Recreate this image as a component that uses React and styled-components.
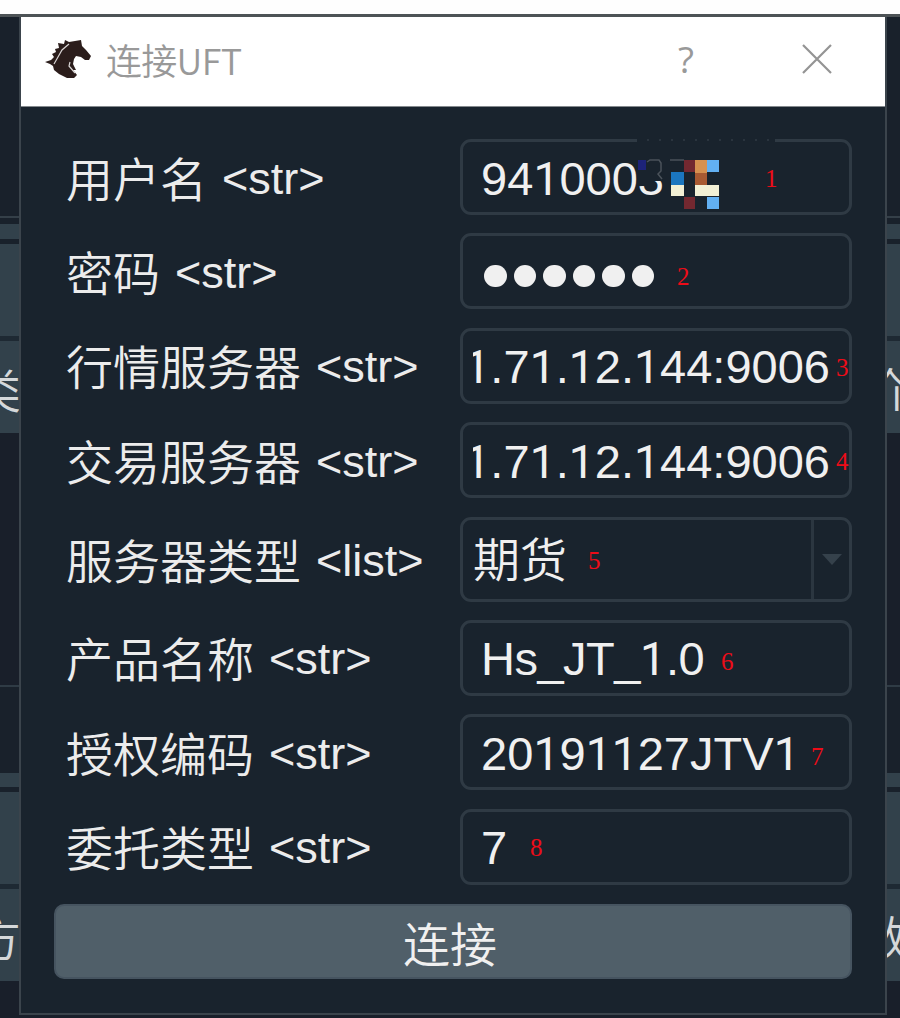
import React from "react";
import styled, { createGlobalStyle } from "styled-components";

const GlobalStyle = createGlobalStyle`
  * {
    box-sizing: border-box;
  }
  body {
    margin: 0;
    background-color: #19232d;
    font-family: "Liberation Sans", "Noto Sans CJK SC", sans-serif;
  }
`;

const Screen = styled.div`
  width: 900px;
  height: 1018px;
  overflow: hidden;
  display: flex;
  flex-direction: column;
  background-color: #191f2a;
`;

const TopStrip = styled.div`
  height: 17px;
  flex: none;
  background-color: #fefefe;
  border-bottom: 3px solid #4d5356;
`;

const Content = styled.div`
  flex: 1;
  display: flex;
  min-height: 0;
`;

const Side = styled.div`
  width: ${(props) => props.$width}px;
  flex: none;
  display: flex;
  flex-direction: column;
  overflow: hidden;
`;

const SideBlock = styled.div`
  height: ${(props) => props.$height}px;
  flex: none;
  display: flex;
  align-items: center;
  justify-content: ${(props) => (props.$right ? "flex-start" : "flex-end")};
  overflow: hidden;
  background-color: ${(props) => props.$color || "#19212b"};
`;

const SideText = styled.span`
  margin: ${(props) => (props.$right ? "-2px 0 0 -26px" : "0 -2px 0 0")};
  color: #d5d8da;
  font-family: "Noto Sans CJK SC", sans-serif;
  font-weight: 350;
  font-size: 47px;
  line-height: 47px;
  white-space: nowrap;
`;

const Dialog = styled.div`
  width: 868px;
  height: 998px;
  flex: none;
  border: 2px solid #3b444c;
  border-top: none;
  background-color: #19232d;
`;

const TitleBar = styled.div`
  height: 90px;
  padding: 0 52px 0 24px;
  display: flex;
  align-items: center;
  background-color: #ffffff;
  border-bottom: 1px solid #84898d;
  color: #999999;
`;

const Title = styled.div`
  flex: 1;
  margin-left: 14px;
  padding-bottom: 6px;
  font-family: "Noto Sans CJK SC", sans-serif;
  font-weight: 350;
  font-size: 36px;
  line-height: 50px;
  letter-spacing: -0.7px;
`;

const HelpButton = styled.div`
  margin-right: 107px;
  padding-bottom: 5px;
  font-family: "Open Sans", sans-serif;
  font-size: 37px;
  line-height: 40px;
`;

const CloseButton = styled.div`
  display: flex;
  padding-bottom: 5px;
`;

const Form = styled.div`
  padding: 32px 33px 0 33px;
  display: flex;
  flex-direction: column;
`;

const Row = styled.div`
  height: ${(props) => props.$height || 76}px;
  margin-bottom: 18.4px;
  display: flex;
  align-items: center;
`;

const Label = styled.div`
  width: 406px;
  flex: none;
  padding: 3px 0 0 12px;
  display: flex;
  align-items: center;
  gap: 15px;
  color: #ececec;
  font-size: 45px;
  line-height: 60px;
  white-space: nowrap;
`;

const Han = styled.span`
  padding-bottom: 4px;
  font-family: "Noto Sans CJK SC", sans-serif;
  font-weight: 350;
  font-size: 47px;
  line-height: 60px;
`;

const Field = styled.div`
  position: relative;
  width: 393px;
  height: 100%;
  padding-left: ${(props) => props.$indent || 18}px;
  display: flex;
  align-items: center;
  border: 3px solid #2f3a44;
  border-radius: 11px;
  color: #f0f0f0;
  font-size: 47px;
  line-height: 60px;
  white-space: nowrap;
`;

const Value = styled.span`
  display: flex;
  align-items: baseline;
  padding-top: 3px;
  letter-spacing: ${(props) => props.$spacing || 0}px;
`;

// Roboto draws the digit 1 without a foot
const One = styled.span`
  width: 26.1px;
  font-family: Roboto, sans-serif;
  font-size: 46px;
  letter-spacing: 0;
  text-align: center;
`;

const HostValue = styled.div`
  width: 357px;
  flex: none;
  display: flex;
  justify-content: flex-end;
  overflow: hidden;
`;

const Mark = styled.span`
  position: absolute;
  left: ${(props) => props.$left}px;
  top: ${(props) => props.$top}px;
  color: #ed0c18;
  font-family: "Liberation Serif", serif;
  font-size: 25px;
  line-height: 28px;
`;

const Dots = styled.div`
  display: flex;
  gap: 7px;
  margin: 9px 0 0 3px;
`;

const Dot = styled.span`
  width: 22.5px;
  height: 22.5px;
  border-radius: 50%;
  background-color: #f0f0f0;
`;

const Mosaic = styled.svg`
  position: absolute;
  left: 172px;
  top: -3px;
`;

const DropDown = styled.div`
  width: 38px;
  height: 100%;
  margin-left: auto;
  display: flex;
  align-items: center;
  justify-content: center;
  border-left: 3px solid #2b3640;
`;

const ConnectButton = styled.button`
  height: 75px;
  margin-top: 1px;
  padding: 0 6px 0 0;
  border: 2px solid #465460;
  border-radius: 10px;
  background-color: #505f69;
  color: #f0f0f0;
`;

const leftBlocks = [
  [199],
  [2, "#343f48"],
  [6],
  [15, "#32414b"],
  [5],
  [92, "#32414b"],
  [5, "#1e2933"],
  [92, "#32414b", "类"],
  [252, "#191f2a"],
  [2, "#2f3b45"],
  [86],
  [14, "#32414b"],
  [5],
  [92, "#32414b"],
  [5, "#1e2933"],
  [92, "#32414b", "方"],
];

const rightBlocks = leftBlocks.map(([height, color, text]) => [
  height,
  color,
  text === "类" ? "价" : text === "方" ? "数" : "",
]);

function SideStrip({ width, blocks, right }) {
  return (
    <Side $width={width}>
      {blocks.map(([height, color, text], index) => (
        <SideBlock key={index} $height={height} $color={color} $right={right}>
          {text && <SideText $right={right}>{text}</SideText>}
        </SideBlock>
      ))}
    </Side>
  );
}

function HorseIcon() {
  return (
    <svg width="47" height="46" viewBox="0 0 47 46">
      <path
        fill="#2b1d1b"
        d="M20 1 L24 3 L36 1 L37 7 L41 11 L46 17 L44 21 L40 21 L36 18 L31 17 L29 20 L28 25 L31 31 L28 31 L32 36 L29 39 L22 39 L14 35 L9 31 L8 27 L5 25 L0 23 L6 21 L9 18 L7 15 L11 13 L10 10 L14 9 L13 4 L19 5 Z"
      />
      <path
        fill="none"
        stroke="#d9d5d4"
        strokeWidth="1.2"
        d="M24 5 L17 11 L13 18 L9 25 M25 23 L24 27 L30 34"
      />
    </svg>
  );
}

function CloseIcon() {
  return (
    <svg width="32" height="32" viewBox="0 0 32 32">
      <path d="M2 2 L30 30 M30 2 L2 30" stroke="#949494" strokeWidth="2.2" />
    </svg>
  );
}

function MaskedDigits() {
  return (
    <Mosaic width="142" height="73" viewBox="0 0 142 73">
      <path fill="#19232d" d="M2 0 H140 V4 H2 Z M4 18 H32 V42 H4 Z" />
      <path
        fill="none"
        stroke="#2a343e"
        strokeWidth="2"
        strokeDasharray="2 10"
        d="M12 1 H138"
      />
      <path
        fill="none"
        stroke="#4a525a"
        strokeWidth="1.5"
        d="M12 23 L15 21 H24 L26 24 V32 L23 35 L27 40 M35 21 H49"
      />
      <path fill="#1d2379" d="M3 21 h8 v10 h-8z" />
      <path fill="#732830" d="M49 21 h11 v12 h-11z M49 58 h11 v12 h-11z" />
      <path fill="#d69150" d="M60 21 h12 v13 h-12z" />
      <path fill="#a85a32" d="M60 34 h12 v12 h-12z" />
      <path fill="#62b0f2" d="M72 21 h12 v12 h-12z M72 58 h12 v12 h-12z" />
      <path fill="#1b76bf" d="M36 33 h13 v13 h-13z" />
      <path fill="#f2f0d5" d="M36 46 h13 v11 h-13z M60 46 h24 v11 h-24z" />
    </Mosaic>
  );
}

function FieldText({ text, spacing }) {
  return (
    <Value $spacing={spacing}>
      {text
        .split(/(1)/)
        .filter((part) => part)
        .map((part, index) =>
          part === "1" ? (
            <One key={index}>1</One>
          ) : (
            <span key={index}>{part}</span>
          )
        )}
    </Value>
  );
}

function FormRow({ name, type = "str", height, indent, children }) {
  return (
    <Row $height={height}>
      <Label>
        <Han>{name}</Han>
        <span>&lt;{type}&gt;</span>
      </Label>
      <Field $indent={indent}>{children}</Field>
    </Row>
  );
}

export default function App() {
  return (
    <Screen>
      <GlobalStyle />
      <TopStrip />
      <Content>
        <SideStrip width={19} blocks={leftBlocks} />
        <Dialog>
          <TitleBar>
            <HorseIcon />
            <Title>连接UFT</Title>
            <HelpButton>?</HelpButton>
            <CloseButton>
              <CloseIcon />
            </CloseButton>
          </TitleBar>
          <Form>
            <FormRow name="用户名">
              <FieldText text="9410003" />
              <MaskedDigits />
              <Mark $left={302} $top={23}>1</Mark>
            </FormRow>
            <FormRow name="密码">
              <Dots>
                {[0, 1, 2, 3, 4, 5].map((dot) => (
                  <Dot key={dot} />
                ))}
              </Dots>
              <Mark $left={214} $top={27}>2</Mark>
            </FormRow>
            <FormRow name="行情服务器" indent={10}>
              <HostValue>
                <FieldText text="1.71.12.144:9006" />
              </HostValue>
              <Mark $left={373} $top={23}>3</Mark>
            </FormRow>
            <FormRow name="交易服务器" indent={10}>
              <HostValue>
                <FieldText text="1.71.12.144:9006" />
              </HostValue>
              <Mark $left={373} $top={23}>4</Mark>
            </FormRow>
            <FormRow name="服务器类型" type="list" height={85} indent={10}>
              <Han>期货</Han>
              <Mark $left={125} $top={27}>5</Mark>
              <DropDown>
                <svg width="20" height="11" viewBox="0 0 20 11">
                  <path d="M0 0 H20 L10 11 Z" fill="#35414b" />
                </svg>
              </DropDown>
            </FormRow>
            <FormRow name="产品名称">
              <FieldText text="Hs_JT_1.0" spacing={-0.5} />
              <Mark $left={258} $top={25}>6</Mark>
            </FormRow>
            <FormRow name="授权编码">
              <FieldText text="20191127JTV1" />
              <Mark $left={348} $top={26}>7</Mark>
            </FormRow>
            <FormRow name="委托类型">
              <FieldText text="7" />
              <Mark $left={67} $top={22}>8</Mark>
            </FormRow>
            <ConnectButton>
              <Han>连接</Han>
            </ConnectButton>
          </Form>
        </Dialog>
        <SideStrip width={13} blocks={rightBlocks} right />
      </Content>
    </Screen>
  );
}
